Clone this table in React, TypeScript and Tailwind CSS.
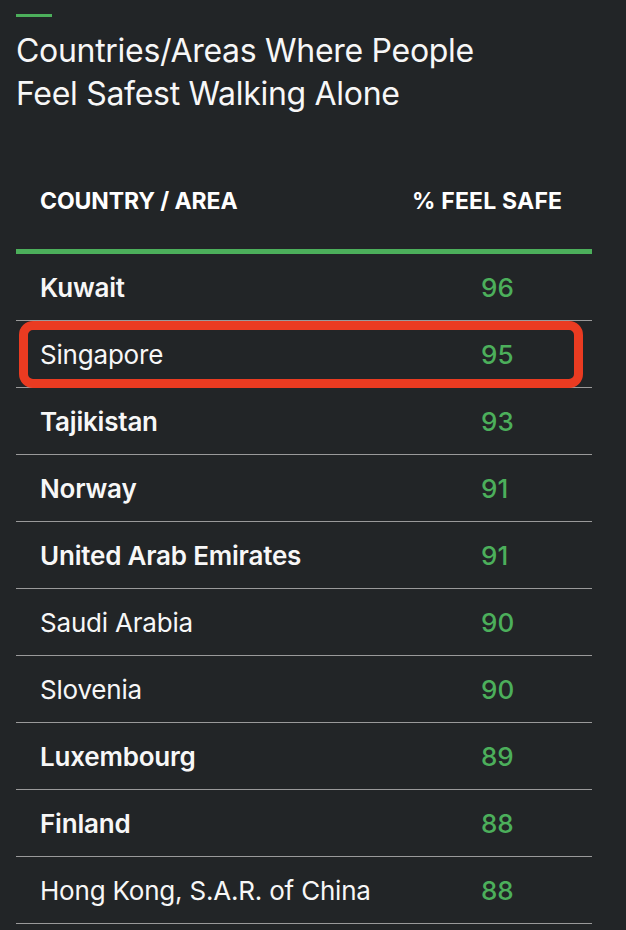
const rows = [
  { name: 'Kuwait', value: 96, bold: true },
  { name: 'Singapore', value: 95, bold: false, highlight: true },
  { name: 'Tajikistan', value: 93, bold: true },
  { name: 'Norway', value: 91, bold: true },
  { name: 'United Arab Emirates', value: 91, bold: true },
  { name: 'Saudi Arabia', value: 90, bold: false },
  { name: 'Slovenia', value: 90, bold: false },
  { name: 'Luxembourg', value: 89, bold: true },
  { name: 'Finland', value: 88, bold: true },
  { name: 'Hong Kong, S.A.R. of China', value: 88, bold: false },
];

export default function App() {
  return (
    <div
      className="w-[626px] h-[930px] overflow-hidden bg-[#222527] text-white px-4 pt-[14px]"
      style={{ fontFamily: 'Inter, "Liberation Sans", sans-serif' }}
    >
      <div className="h-[3px] w-9 bg-[#4caf5b]" />
      <h1 className="mt-[12px] text-[32px] leading-[43px] font-normal tracking-[-0.3px] text-[#f7f7f7]">
        Countries/Areas Where People
        <br />
        Feel Safest Walking Alone
      </h1>

      <div className="mt-[39px] w-[576px]">
        <div className="flex h-[95px] items-center">
          <div className="flex-1 pl-6 text-[23px] font-bold tracking-[-0.1px]">COUNTRY / AREA</div>
          <div className="w-[180px] text-[23px] font-bold tracking-[0.2px]">% FEEL SAFE</div>
        </div>
        <div className="h-[5px] bg-[#4caf5b]" />

        {rows.map((r) => (
          <div
            key={r.name}
            className="relative flex h-[67px] items-center border-b border-[#9a9a9a]"
          >
            <div
              className={`flex-1 pl-6 text-[26px] tracking-[-0.2px] ${r.bold ? 'font-semibold' : 'font-normal'} text-[#f7f7f7]`}
            >
              {r.name}
            </div>
            <div className="w-[180px] pl-[69px] text-[26px] font-medium text-[#4caf5b]">{r.value}</div>
            {r.highlight && (
              <div className="absolute left-[3px] right-[9px] top-0 bottom-[-1px] rounded-[14px] border-[9px] border-[#ea3b21]" />
            )}
          </div>
        ))}
      </div>
    </div>
  );
}
